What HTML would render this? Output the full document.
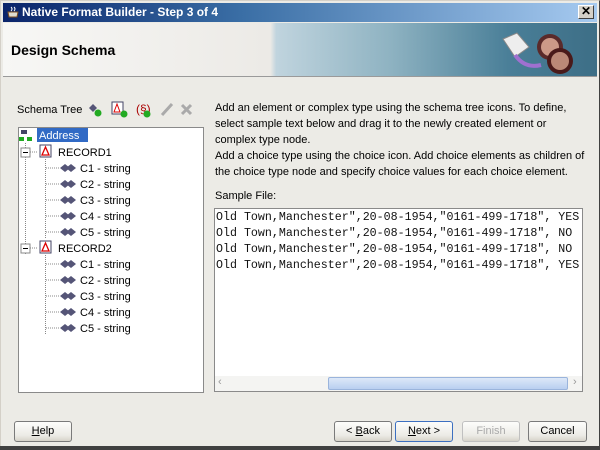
<!DOCTYPE html>
<html><head><style>
*{margin:0;padding:0;box-sizing:border-box}
body{width:600px;height:450px;overflow:hidden;background:#ecebe6;font-family:"Liberation Sans",sans-serif;font-size:11px;color:#000;position:relative}
.a{position:absolute}
.btn{position:absolute;top:421px;height:21px;border:1px solid #7a7a7a;border-radius:3px;background:linear-gradient(#fdfdfb,#ecebe6 70%,#d6d3ca);text-align:center;line-height:19px;font-size:11px}
.t{position:absolute;white-space:nowrap;font-size:11px}
.mono{font-family:"Liberation Mono",monospace;font-size:11.65px;line-height:16px;white-space:pre;color:#111}
</style></head><body>
<div class="a" style="left:0;top:0;width:600px;height:450px;border:1px solid #d4d0c8;border-right-color:#404040;border-bottom-color:#404040"></div>
<div class="a" style="left:3px;top:3px;width:594px;height:19px;background:linear-gradient(90deg,#0a246a,#3a6ea5 40%,#a6caf0)"></div>
<div class="a" style="left:6px;top:5px;width:14px;height:14px;"><svg width="14" height="14"><path d="M2 7h10l-1 5H3z" fill="#e0ddd0" stroke="#805020"/><path d="M5 2q2 2 0 4M8 2q2 2 0 4" stroke="#fff" fill="none"/></svg></div>
<div class="t" style="left:22px;top:5px;color:#fff;font-weight:bold;font-size:12px">Native Format Builder - Step 3 of 4</div>
<div class="a" style="left:578px;top:5px;width:16px;height:14px;background:#d4d0c8;border:1px solid;border-color:#fff #404040 #404040 #fff;font-weight:bold;font-size:12px;line-height:11px;text-align:center">✕</div>
<div class="a" style="left:3px;top:23px;width:594px;height:54px;background:linear-gradient(90deg,#f7f7f5,#eceae6 45%,#c0d4de 46%,#8fb3c2 65%,#4a7f98 85%,#3d6e86);border-bottom:1px solid #9a9a9a"></div>
<div class="t" style="left:11px;top:42px;font-weight:bold;font-size:14px">Design Schema</div>
<svg class="a" style="left:495px;top:25px" width="95" height="52"><path d="M8 14l14-6 12 14-14 10z" fill="#eee" stroke="#888"/><path d="M20 30q10 14 26 10" stroke="#a070d0" stroke-width="4" fill="none"/><circle cx="55" cy="22" r="13" fill="#5a2a2a"/><circle cx="55" cy="22" r="9" fill="#c98" /><circle cx="65" cy="36" r="13" fill="#4a1a1a"/><circle cx="65" cy="36" r="9" fill="#b87"/></svg>
<div class="t" style="left:17px;top:104px">Schema Tree</div>
<svg class="a" style="left:86px;top:100px" width="120" height="20">
<path d="M3 8l4-4 4 4-4 4z" fill="#557" /><circle cx="12" cy="13" r="3.5" fill="#2a2"/>
<rect x="26" y="2" width="11" height="12" fill="#fff" stroke="#446"/><path d="M28 12l3-8 3 8z" fill="none" stroke="#d00"/><circle cx="38" cy="14" r="3.5" fill="#2a2"/>
<text x="50" y="13" font-size="12" fill="#a00" font-family="Liberation Sans">(§)</text><circle cx="61" cy="14" r="3.5" fill="#2a2"/>
<path d="M76 15l10-11" stroke="#aaa" stroke-width="3"/><path d="M96 5l9 9M105 5l-9 9" stroke="#aaa" stroke-width="3"/>
</svg>
<div class="a" style="left:18px;top:127px;width:186px;height:266px;background:#fff;border:1px solid #8a8a8a"></div>
<svg class="a" style="left:18px;top:127px" width="186" height="220" font-family="Liberation Sans" font-size="11">
<g stroke="#888" stroke-dasharray="1 1" fill="none">
<path d="M7.5 16v112M12 25h8M12 121h8M27.5 32v80M27.5 128v80"/>
<path d="M28 41h14M28 57h14M28 73h14M28 89h14M28 105h14M28 137h14M28 153h14M28 169h14M28 185h14M28 201h14"/>
</g>
<rect x="3" y="21" width="9" height="9" fill="#fff" stroke="#888"/><path d="M5 25.5h5" stroke="#000"/>
<rect x="3" y="117" width="9" height="9" fill="#fff" stroke="#888"/><path d="M5 121.5h5" stroke="#000"/>
<g><rect x="3" y="3" width="6" height="4" fill="#446"/><rect x="1" y="10" width="5" height="4" fill="#2a2"/><rect x="9" y="10" width="5" height="4" fill="#2a2"/></g>
<rect x="19" y="1" width="51" height="14" fill="#316ac5"/><text x="21" y="12" fill="#fff">Address</text>
<rect x="22" y="18" width="11" height="12" fill="#fff" stroke="#446"/><path d="M24 28l3.5-8 3.5 8z" fill="none" stroke="#d00" stroke-width="1.3"/><text x="40" y="29">RECORD1</text>
<rect x="22" y="114" width="11" height="12" fill="#fff" stroke="#446"/><path d="M24 124l3.5-8 3.5 8z" fill="none" stroke="#d00" stroke-width="1.3"/><text x="40" y="125">RECORD2</text>
<g fill="#557">
<path d="M42 41l5-4 5 4-5 4zM48 41l5-4 5 4-5 4z"/><path d="M42 57l5-4 5 4-5 4zM48 57l5-4 5 4-5 4z"/><path d="M42 73l5-4 5 4-5 4zM48 73l5-4 5 4-5 4z"/><path d="M42 89l5-4 5 4-5 4zM48 89l5-4 5 4-5 4z"/><path d="M42 105l5-4 5 4-5 4zM48 105l5-4 5 4-5 4z"/>
<path d="M42 137l5-4 5 4-5 4zM48 137l5-4 5 4-5 4z"/><path d="M42 153l5-4 5 4-5 4zM48 153l5-4 5 4-5 4z"/><path d="M42 169l5-4 5 4-5 4zM48 169l5-4 5 4-5 4z"/><path d="M42 185l5-4 5 4-5 4zM48 185l5-4 5 4-5 4z"/><path d="M42 201l5-4 5 4-5 4zM48 201l5-4 5 4-5 4z"/>
</g>
<g><text x="62" y="45">C1 - string</text><text x="62" y="61">C2 - string</text><text x="62" y="77">C3 - string</text><text x="62" y="93">C4 - string</text><text x="62" y="109">C5 - string</text>
<text x="62" y="141">C1 - string</text><text x="62" y="157">C2 - string</text><text x="62" y="173">C3 - string</text><text x="62" y="189">C4 - string</text><text x="62" y="205">C5 - string</text></g>
</svg>
<div class="a" style="left:215px;top:100px;line-height:16px;font-size:11px;width:380px">Add an element or complex type using the schema tree icons. To define,<br>select sample text below and drag it to the newly created element or<br>complex type node.<br>Add a choice type using the choice icon. Add choice elements as children of<br>the choice type node and specify choice values for each choice element.</div>
<div class="t" style="left:215px;top:190px">Sample File:</div>
<div class="a" style="left:214px;top:208px;width:369px;height:184px;background:#fff;border:1px solid #8a8a8a;overflow:hidden">
<div class="mono" style="position:absolute;left:1px;top:1px">Old Town,Manchester",20-08-1954,"0161-499-1718", YES
Old Town,Manchester",20-08-1954,"0161-499-1718", NO
Old Town,Manchester",20-08-1954,"0161-499-1718", NO
Old Town,Manchester",20-08-1954,"0161-499-1718", YES</div>
<div class="a" style="left:0;top:167px;width:367px;height:15px;background:#f4f4f2"></div>
<div class="a" style="left:113px;top:168px;width:240px;height:13px;background:linear-gradient(#dde8f8,#b9cff0);border:1px solid #9ab4dc;border-radius:2px"></div>
<div class="t" style="left:3px;top:167px;color:#999">‹</div><div class="t" style="left:358px;top:167px;color:#999">›</div>
</div>
<div class="btn" style="left:14px;width:58px"><u>H</u>elp</div>
<div class="btn" style="left:334px;width:58px">&lt; <u>B</u>ack</div>
<div class="btn" style="left:395px;width:58px;border-color:#3c6fc0"><u>N</u>ext &gt;</div>
<div class="btn" style="left:462px;width:58px;color:#aaa;border-color:#c0c0c0">Finish</div>
<div class="btn" style="left:528px;width:59px">Cancel</div>
<div class="a" style="left:0;top:446px;width:600px;height:4px;background:#404040"></div>
</body></html>
